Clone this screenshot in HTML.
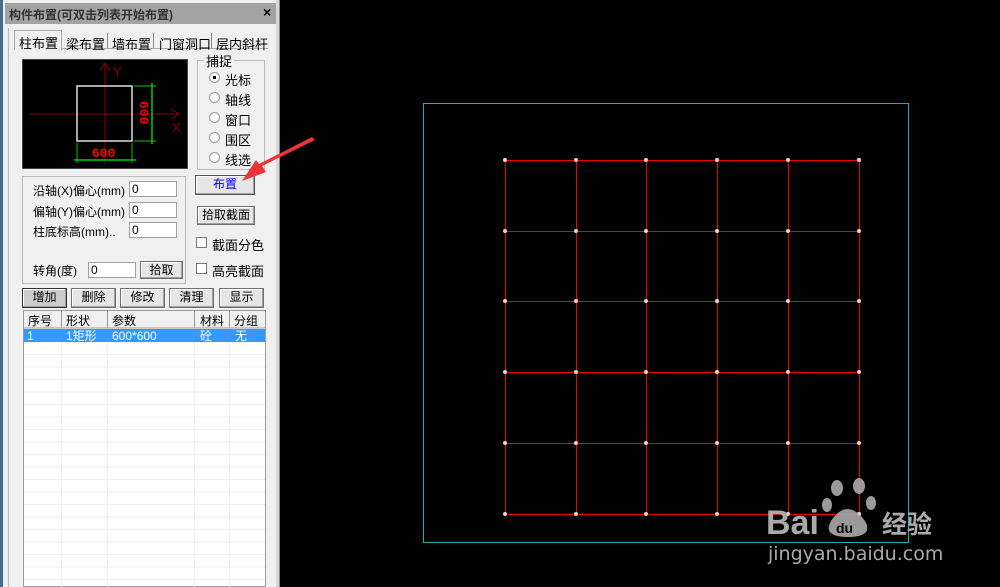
<!DOCTYPE html>
<html><head><meta charset="utf-8"><style>
*{margin:0;padding:0;box-sizing:border-box}
body{width:1000px;height:587px;background:#000;position:relative;overflow:hidden;font-family:"Liberation Sans","Noto Sans CJK SC",sans-serif;font-size:12px;color:#000}
.a{position:absolute}
.btn{position:absolute;background:#e6e6e6;border:1px solid #707070;box-shadow:inset -1px -1px 0 #a0a0a0,inset 1px 1px 0 #fff;text-align:center;font-size:12px;line-height:16px}
.inp{position:absolute;background:#fff;border:1px solid #a0a0a0;font-size:12px;line-height:14px;padding-left:2px}
.rad{position:absolute;width:11px;height:11px;border-radius:50%;background:#fff;border:1px solid #999}
.chk{position:absolute;width:11px;height:11px;background:#fff;border:1px solid #777}
.t{position:absolute;white-space:nowrap}
</style></head><body>
<div class="a" style="left:0;top:0;width:280px;height:587px;background:#f0f0f0"></div>
<div class="a" style="left:0;top:0;width:3px;height:587px;background:#3f6f8f"></div>
<div class="a" style="left:8px;top:28px;width:1px;height:559px;background:#b8b8b8"></div>
<div class="a" style="left:276px;top:0;width:4px;height:587px;background:#d8d8d8;border-right:1px solid #888"></div>
<div class="a" style="left:5px;top:3px;width:271px;height:21px;background:#a3a3a3"></div>
<div class="t" style="left:9px;top:6px;font-size:12px;color:#333;font-weight:bold">构件布置(可双击列表开始布置)</div>
<div class="t" style="left:263px;top:4px;font-size:14px;font-weight:bold">×</div>
<div class="a" style="left:14px;top:48px;width:254px;height:1px;background:#aaa"></div>
<div class="a" style="left:14px;top:30px;width:48px;height:20px;background:#f0f0f0;border:1px solid #aaa;border-bottom:none"></div>
<div class="t" style="left:19px;top:33px;font-size:13px">柱布置</div>
<div class="t" style="left:66px;top:34px;font-size:13px">梁布置</div>
<div class="a" style="left:107px;top:33px;width:1px;height:15px;background:#888"></div>
<div class="t" style="left:112px;top:34px;font-size:13px">墙布置</div>
<div class="a" style="left:153px;top:33px;width:1px;height:15px;background:#888"></div>
<div class="t" style="left:159px;top:34px;font-size:13px">门窗洞口</div>
<div class="a" style="left:211px;top:33px;width:1px;height:15px;background:#888"></div>
<div class="t" style="left:216px;top:34px;font-size:13px">层内斜杆</div>
<svg class="a" style="left:22px;top:59px" width="166" height="110">
<rect x="0" y="0" width="166" height="110" fill="#000" stroke="#888"/>
<line x1="83" y1="4" x2="83" y2="105" stroke="#8b0000"/>
<polyline points="78,12 83,4 88,12" fill="none" stroke="#8b0000"/>
<line x1="8" y1="55" x2="157" y2="55" stroke="#8b0000"/>
<polyline points="149,50 157,55 149,60" fill="none" stroke="#8b0000"/>
<text x="91" y="17" fill="#8b0000" font-size="13" font-family="Liberation Sans">Y</text>
<text x="150" y="73" fill="#8b0000" font-size="13" font-family="Liberation Sans">X</text>
<rect x="55" y="27" width="55" height="55" fill="none" stroke="#ddd" stroke-width="1.5"/>
<line x1="130" y1="24" x2="130" y2="85" stroke="#0c0" stroke-width="1.5"/>
<line x1="112" y1="27" x2="134" y2="27" stroke="#0c0"/><line x1="112" y1="82" x2="134" y2="82" stroke="#0c0"/>
<line x1="52" y1="101" x2="114" y2="101" stroke="#0c0" stroke-width="1.5"/>
<line x1="55" y1="84" x2="55" y2="104" stroke="#0c0"/><line x1="110" y1="84" x2="110" y2="104" stroke="#0c0"/>
<text x="70" y="98" fill="#f00" font-size="13" font-weight="bold" font-family="Liberation Mono">600</text>
<text transform="translate(118,42) rotate(90)" fill="#f00" font-size="13" font-weight="bold" font-family="Liberation Mono">600</text>
</svg>
<div class="a" style="left:197px;top:60px;width:68px;height:110px;border:1px solid #bbb"></div>
<div class="t" style="left:204px;top:51px;background:#f0f0f0;padding:0 2px;font-size:13px">捕捉</div>
<div class="rad" style="left:209px;top:72px"></div><div class="a" style="left:213px;top:76px;width:3px;height:3px;background:#000"></div><div class="t" style="left:225px;top:70px;font-size:13px">光标</div>
<div class="rad" style="left:209px;top:92px"></div><div class="t" style="left:225px;top:90px;font-size:13px">轴线</div>
<div class="rad" style="left:209px;top:112px"></div><div class="t" style="left:225px;top:110px;font-size:13px">窗口</div>
<div class="rad" style="left:209px;top:132px"></div><div class="t" style="left:225px;top:130px;font-size:13px">围区</div>
<div class="rad" style="left:209px;top:152px"></div><div class="t" style="left:225px;top:150px;font-size:13px">线选</div>
<div class="a" style="left:22px;top:176px;width:164px;height:108px;border:1px solid #bbb"></div>
<div class="t" style="left:33px;top:182px;font-size:12px">沿轴(X)偏心(mm)</div><div class="inp" style="left:129px;top:181px;width:48px;height:16px">0</div>
<div class="t" style="left:33px;top:203px;font-size:12px">偏轴(Y)偏心(mm)</div><div class="inp" style="left:129px;top:202px;width:48px;height:16px">0</div>
<div class="t" style="left:33px;top:223px;font-size:12px">柱底标高(mm)..</div><div class="inp" style="left:129px;top:222px;width:48px;height:16px">0</div>
<div class="t" style="left:33px;top:262px;font-size:12px">转角(度)</div><div class="inp" style="left:88px;top:262px;width:48px;height:16px">0</div>
<div class="btn" style="left:140px;top:261px;width:43px;height:18px">拾取</div>
<div class="btn" style="left:195px;top:175px;width:60px;height:20px;color:#00f;border-color:#555">布置</div>
<div class="btn" style="left:197px;top:206px;width:58px;height:19px">拾取截面</div>
<div class="chk" style="left:196px;top:237px"></div><div class="t" style="left:212px;top:235px;font-size:13px">截面分色</div>
<div class="chk" style="left:196px;top:263px"></div><div class="t" style="left:212px;top:261px;font-size:13px">高亮截面</div>
<div class="btn" style="left:22px;top:288px;width:45px;height:20px;background:#ccc;border-color:#333">增加</div>
<div class="btn" style="left:71px;top:288px;width:45px;height:20px">删除</div>
<div class="btn" style="left:120px;top:288px;width:45px;height:20px">修改</div>
<div class="btn" style="left:169px;top:288px;width:45px;height:20px">清理</div>
<div class="btn" style="left:219px;top:288px;width:45px;height:20px">显示</div>
<div class="a" style="left:23px;top:310px;width:243px;height:277px;background:#fff;border:1px solid #999"></div>
<svg class="a" style="left:24px;top:311px" width="241" height="276" shape-rendering="crispEdges">
<rect x="0" y="0" width="241" height="17" fill="#f0f0f0"/>
<line x1="0" y1="17" x2="241" y2="17" stroke="#999"/>
<rect x="0" y="18" width="241" height="13" fill="#3399ff"/>
<g stroke="#eee">
<line x1="0" y1="43.5" x2="241" y2="43.5"/><line x1="0" y1="56" x2="241" y2="56"/><line x1="0" y1="68.5" x2="241" y2="68.5"/><line x1="0" y1="81" x2="241" y2="81"/><line x1="0" y1="93.5" x2="241" y2="93.5"/><line x1="0" y1="106" x2="241" y2="106"/><line x1="0" y1="118.5" x2="241" y2="118.5"/><line x1="0" y1="131" x2="241" y2="131"/><line x1="0" y1="143.5" x2="241" y2="143.5"/><line x1="0" y1="156" x2="241" y2="156"/><line x1="0" y1="168.5" x2="241" y2="168.5"/><line x1="0" y1="181" x2="241" y2="181"/><line x1="0" y1="193.5" x2="241" y2="193.5"/><line x1="0" y1="206" x2="241" y2="206"/><line x1="0" y1="218.5" x2="241" y2="218.5"/><line x1="0" y1="231" x2="241" y2="231"/><line x1="0" y1="243.5" x2="241" y2="243.5"/><line x1="0" y1="256" x2="241" y2="256"/><line x1="0" y1="268.5" x2="241" y2="268.5"/>
<line x1="37.5" y1="31" x2="37.5" y2="276"/><line x1="83.5" y1="31" x2="83.5" y2="276"/><line x1="170.5" y1="31" x2="170.5" y2="276"/><line x1="205.5" y1="31" x2="205.5" y2="276"/>
</g>
<g stroke="#999"><line x1="37.5" y1="0" x2="37.5" y2="17"/><line x1="83.5" y1="0" x2="83.5" y2="17"/><line x1="170.5" y1="0" x2="170.5" y2="17"/><line x1="205.5" y1="0" x2="205.5" y2="17"/></g>
<g font-size="12" font-family="Liberation Sans, Noto Sans CJK SC, sans-serif">
<text x="4" y="14">序号</text><text x="42" y="14">形状</text><text x="88" y="14">参数</text><text x="176" y="14">材料</text><text x="210" y="14">分组</text>
<g fill="#fff"><text x="3" y="29">1</text><text x="42" y="29">1矩形</text><text x="88" y="29">600*600</text><text x="176" y="29">砼</text><text x="211" y="29">无</text></g>
</g>
</svg>
<svg class="a" style="left:0;top:0" width="1000" height="587">
<rect x="423.5" y="103.5" width="485" height="439" fill="none" stroke="#1ab3b3" shape-rendering="crispEdges"/>
<g stroke="#e00" stroke-width="1" shape-rendering="crispEdges">
<line x1="505" y1="160.5" x2="860" y2="160.5"/><line x1="505" y1="231.5" x2="860" y2="231.5"/><line x1="505" y1="301.5" x2="860" y2="301.5"/><line x1="505" y1="372.5" x2="860" y2="372.5"/><line x1="505" y1="443.5" x2="860" y2="443.5"/><line x1="505" y1="514.5" x2="860" y2="514.5"/>
<line x1="505.5" y1="160" x2="505.5" y2="515"/><line x1="576.5" y1="160" x2="576.5" y2="515"/><line x1="646.5" y1="160" x2="646.5" y2="515"/><line x1="717.5" y1="160" x2="717.5" y2="515"/><line x1="788.5" y1="160" x2="788.5" y2="515"/><line x1="859.5" y1="160" x2="859.5" y2="515"/>
</g>
<g fill="#fcc">
<circle cx="505" cy="160" r="2"/><circle cx="576" cy="160" r="2"/><circle cx="646" cy="160" r="2"/><circle cx="717" cy="160" r="2"/><circle cx="788" cy="160" r="2"/><circle cx="859" cy="160" r="2"/>
<circle cx="505" cy="231" r="2"/><circle cx="576" cy="231" r="2"/><circle cx="646" cy="231" r="2"/><circle cx="717" cy="231" r="2"/><circle cx="788" cy="231" r="2"/><circle cx="859" cy="231" r="2"/>
<circle cx="505" cy="301" r="2"/><circle cx="576" cy="301" r="2"/><circle cx="646" cy="301" r="2"/><circle cx="717" cy="301" r="2"/><circle cx="788" cy="301" r="2"/><circle cx="859" cy="301" r="2"/>
<circle cx="505" cy="372" r="2"/><circle cx="576" cy="372" r="2"/><circle cx="646" cy="372" r="2"/><circle cx="717" cy="372" r="2"/><circle cx="788" cy="372" r="2"/><circle cx="859" cy="372" r="2"/>
<circle cx="505" cy="443" r="2"/><circle cx="576" cy="443" r="2"/><circle cx="646" cy="443" r="2"/><circle cx="717" cy="443" r="2"/><circle cx="788" cy="443" r="2"/><circle cx="859" cy="443" r="2"/>
<circle cx="505" cy="514" r="2"/><circle cx="576" cy="514" r="2"/><circle cx="646" cy="514" r="2"/><circle cx="717" cy="514" r="2"/><circle cx="788" cy="514" r="2"/><circle cx="859" cy="514" r="2"/>
</g>
<polygon points="315,140 262,166 266,172 242,181 256,160 259,164 312,137" fill="#ee3333"/>
<g fill="#aaa" opacity="0.9">
<ellipse cx="837" cy="488" rx="6" ry="8"/><ellipse cx="859" cy="486" rx="6" ry="8"/><ellipse cx="827" cy="505" rx="5" ry="7"/><ellipse cx="871" cy="503" rx="5" ry="7"/>
<path d="M831,521 Q847,497 865,521 Q874,537 848,537 Q822,537 831,521Z"/>
</g>
<text x="766" y="534" fill="#aaa" font-size="34" font-weight="bold" font-family="Liberation Sans">Bai</text>
<text x="836" y="533" fill="#000" font-size="14" font-weight="bold" font-family="Liberation Sans">du</text>
<text x="882" y="533" fill="#aaa" font-size="25" font-weight="bold" font-family="Noto Sans CJK SC, sans-serif">经验</text>
<text x="768" y="560" fill="#aaa" font-size="19" font-family="DejaVu Sans, sans-serif">jingyan.baidu.com</text>
</svg>
</body></html>
